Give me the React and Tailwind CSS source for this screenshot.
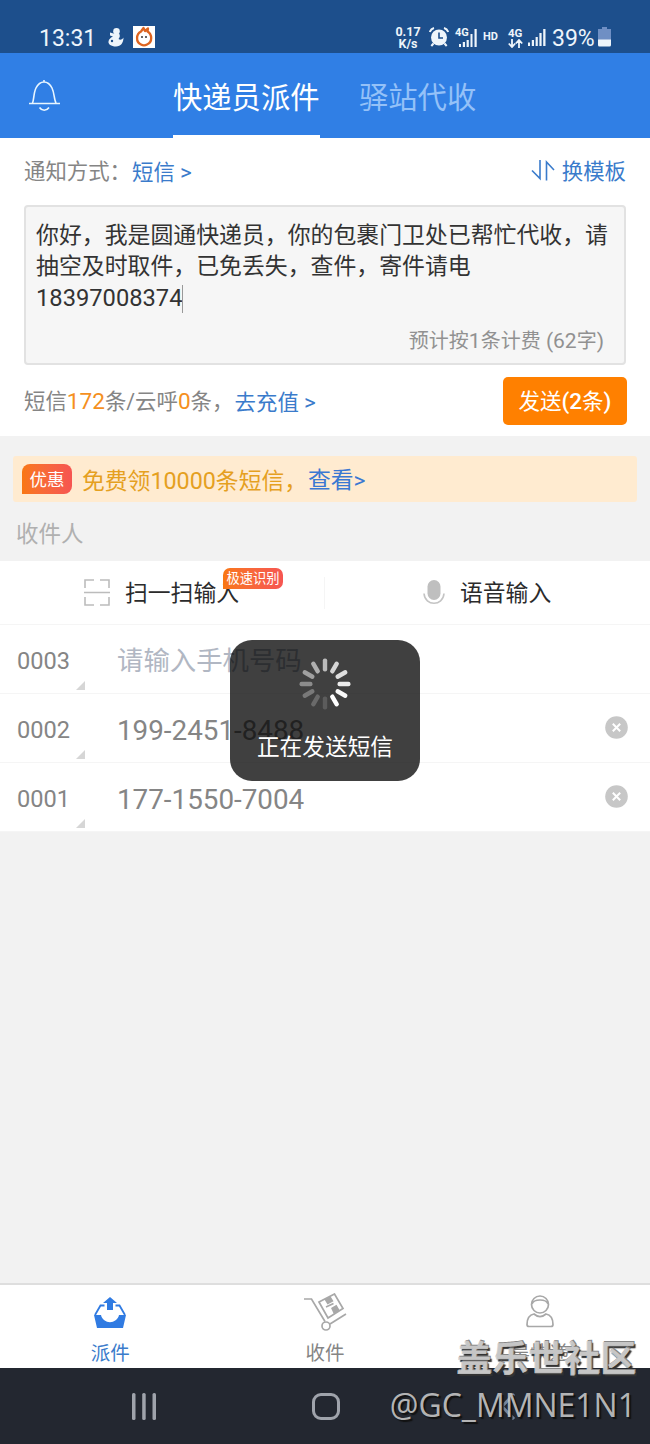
const recipients = [
  { id: "0003", phone: "" },
  { id: "0002", phone: "199-2451-8488" },
  { id: "0001", phone: "177-1550-7004" },
];

const spokes = [0.65, 0.78, 0.83, 0.9, 0.97, 1, 0.15, 0.22, 0.3, 0.4, 0.5, 0.58];

const SignalBars = () => (
  <svg width="18" height="17" viewBox="0 0 18 17" fill="#eef5fb">
    <rect x="0" y="13.5" width="2" height="3.5" />
    <rect x="3.8" y="11" width="2.2" height="6" />
    <rect x="7.6" y="8" width="2.2" height="9" />
    <rect x="11.4" y="4" width="2.2" height="13" />
    <rect x="15.2" y="0" width="2.3" height="17" />
  </svg>
);

const StatusBar = () => (
  <div className="flex h-[53px] items-start bg-[#1d4f8c] pl-[39px] pt-[23px] text-[#eef5fb]">
    <span className="w-[57px] text-[23px] leading-[31px]">13:31</span>
    <svg className="ml-3 mt-[5px]" width="16" height="19" viewBox="0 0 16 19" fill="#eef5fb">
      <circle cx="8.5" cy="3.3" r="3.3" />
      <path d="M5.500 5.500h5.500c1.500 2 .8 4-.5 5.500 2 1.500 3.800.5 5-1.500 0 5-2.500 9-7.500 9-5 0-8-2.500-7.500-5C.8 11 3 9.500 5 8.500L2 7.500V4.500Z" />
      <circle cx="4" cy="13" r="1.200" fill="#1d4f8c" />
    </svg>
    <svg className="ml-[9px] mt-[3px]" width="22" height="22" viewBox="0 0 22 22">
      <rect width="22" height="22" fill="#fff" />
      <path d="M8 5.500C3 8 2.500 16 8 18.500c2 1.200 4 1.200 6 0C20 16 19 8 14.500 5.500L15 2.500 12 5 10.500 2Z" fill="#fff" stroke="#dd6420" strokeWidth="2.300" strokeLinejoin="round" />
      <circle cx="9" cy="11" r="1" fill="#333" />
      <circle cx="13" cy="11" r="1" fill="#333" />
    </svg>
    <div className="ml-[240px] mt-[3px] w-[26px] text-center text-[12.5px] font-bold leading-[12px]">
      <div>0.17</div>
      <div>K/s</div>
    </div>
    <svg className="ml-2 mt-1" width="20" height="20" viewBox="0 0 20 20">
      <circle cx="10" cy="10.500" r="8" fill="#eef5fb" />
      <path d="M10 5.500v5.500h4" fill="none" stroke="#1d4f8c" strokeWidth="1.600" />
      <path d="M.8 5C1.500 3 3 1.500 5 1M15 1c2 .5 3.500 2 4.200 4M4.500 16.500l-2.200 2.500M15.500 16.500l2.200 2.500" fill="none" stroke="#eef5fb" strokeWidth="2" />
    </svg>
    <div className="relative ml-[6px] mt-[6px] h-[18px] w-[22px]">
      <span className="absolute left-0 top-[-2px] text-[11px] font-bold leading-3">4G</span>
      <svg className="absolute left-1 top-0" width="18" height="18" viewBox="0 0 18 18" fill="#eef5fb">
        <path d="M0 15h2v3H0zM3.800 13H6v5H3.800zM7.600 11h2.200v7H7.600zM11.500 5h2v13h-2zM15.500 0h2.200v18h-2.200z" />
      </svg>
    </div>
    <span className="ml-[6px] mt-[7px] w-4 text-[11px] font-bold leading-[14px]">HD</span>
    <div className="ml-[9px] mt-1 w-4">
      <div className="text-[11.500px] font-bold leading-3">4G</div>
      <svg width="15" height="9" viewBox="0 0 15 9" fill="none" stroke="#eef5fb" strokeWidth="1.800">
        <path d="M4 0v8M.8 4.500 4 8l3.200-3.500M11 9V1M7.800 4.500 11 1l3.200 3.500" />
      </svg>
    </div>
    <div className="ml-1 mt-[6px]">
      <SignalBars />
    </div>
    <span className="ml-[6px] w-[44px] text-[23px] leading-[31px]">39%</span>
    <svg className="ml-[2px] mt-[4px]" width="13" height="20" viewBox="0 0 13 20">
      <path d="M4 0h5v2h4v11H0V2h4Z" fill="#6f8fc4" />
      <path d="M0 12.500h13v5.500a1.500 1.500 0 0 1-1.500 1.500h-10A1.500 1.500 0 0 1 0 18Z" fill="#eef5fb" />
    </svg>
  </div>
);

const Header = () => (
  <div className="flex h-[85px] bg-[#307fe5] pl-7 text-[29.3px]">
    <svg className="mt-[26px]" width="33" height="33" viewBox="0 0 33 33" fill="none" stroke="#e8f6ff" strokeWidth="1.600">
      <path d="M16 1v2M1 24.500h31M4.500 24C6 21 5.500 14 8 9c2-4 5-6 8-6s6 2 8 6c2.500 5 2 12 4 15M11.500 28.500c2.500 3.700 7 3.700 9.500 0" />
    </svg>
    <div className="ml-[112px] flex h-[85px] w-[147px] flex-col justify-between whitespace-nowrap text-white">
      <span className="mt-[23px] leading-[44px]">快递员派件</span>
      <span className="h-[3px] bg-white" />
    </div>
    <span className="ml-[39px] mt-[23px] leading-[44px] text-[#94c1f8]">驿站代收</span>
  </div>
);

const MessagePanel = () => (
  <div className="h-[298px] bg-white px-6 pt-[18px] text-[21.4px] text-[#858585]">
    <div className="flex h-8 items-center justify-between leading-8">
      <div className="flex">
        <span className="w-[108px]">通知方式：</span>
        <span className="text-[#3a7bcb]">
          短信 <span className="text-[22.5px]">&gt;</span>
        </span>
      </div>
      <div className="flex items-center text-[#3a7bcb]">
        <svg className="mb-1 mr-[7px]" width="24" height="21" viewBox="0 0 24 21" fill="none" stroke="#3a7bcb" strokeWidth="1.600">
          <path d="M9 0v18.500L1 10.500M15.500 20.500V2l7.500 8" />
        </svg>
        <span>换模板</span>
      </div>
    </div>
    <div className="mt-[17px] flex h-[160px] flex-col justify-between rounded border-2 border-[#e2e2e2] bg-[#f6f6f6] pl-[10px] pr-5">
      <div className="pt-[13px] text-[22.88px] leading-[31.4px] text-[#333]">
        <div className="whitespace-nowrap">你好，我是圆通快递员，你的包裹门卫处已帮忙代收，请</div>
        <div>抽空及时取件，已免丢失，查件，寄件请电</div>
        <div className="flex items-center">
          <span className="text-[23.7px]">18397008374</span>
          <span className="h-7 w-px bg-[#999]" />
        </div>
      </div>
      <div className="pb-[8px] text-right text-[20px] leading-[28px] text-[#919191]">
        预计按<span className="text-[21px]">1</span>条计费<span className="text-[21px]"> (62</span>字<span className="text-[21px]">)</span>
      </div>
    </div>
    <div className="mt-3 flex h-12 items-center justify-between">
      <div className="flex whitespace-nowrap pt-[3px] leading-8">
        <span>短信</span>
        <span className="text-[22.600px] text-[#f5901e]">172</span>
        <span>条/云呼</span>
        <span className="text-[22.600px] text-[#f5901e]">0</span>
        <span className="w-[44px]">条，</span>
        <span className="text-[#3a7bcb]">
          去充值 <span className="text-[22.5px]">&gt;</span>
        </span>
      </div>
      <button className="-mr-px h-12 w-[124px] rounded-[5px] bg-[#ff8000] pt-[2px] text-[21.500px] text-white">
        发送<span className="text-[22.5px] font-medium">(2</span>条<span className="text-[22.5px] font-medium">)</span>
      </button>
    </div>
  </div>
);

const PromoPanel = () => (
  <div className="h-[125px] px-[13px] pt-5">
    <div className="flex h-[46px] items-center rounded-[3px] bg-[#ffebd0] pl-[9px] text-[22.800px]">
      <span className="h-[30px] w-[50px] rounded-lg rounded-bl-none bg-linear-to-r from-[#f97710] to-[#f65551] pt-px text-center text-[17.500px] leading-[31px] text-white">优惠</span>
      <span className="ml-[10px] w-[226px] whitespace-nowrap pt-[5px] text-[#e5a01f]">
        免费领<span className="text-[23.300px]">10000</span>条短信，
      </span>
      <span className="pt-[5px] text-[#3a78d2]">查看&gt;</span>
    </div>
    <div className="mt-[15px] pl-[3px] text-[22.500px] leading-[34px] text-[#b0b0b0]">收件人</div>
  </div>
);

const InputActions = () => (
  <div className="flex h-16 items-center border-b border-[#f5f5f5] bg-white text-[22.800px] text-[#2b2b2b]">
    <div className="relative flex h-8 w-[325px] items-center border-r border-[#f5f5f5] pl-[84px]">
      <svg width="26" height="27" viewBox="0 0 26 27" fill="none" stroke="#bcbcbc" strokeWidth="1.600">
        <path d="M1 9V1h9M16 1h9v8M25 18v8h-9M10 26H1v-8M0 13.500h26" />
      </svg>
      <span className="ml-[15px] pt-1">扫一扫输入</span>
      <span className="absolute left-[223px] top-[-9px] h-[21px] w-[60px] rounded-[7px] rounded-bl-none bg-linear-to-r from-[#f97710] to-[#f65551] text-center text-[13.300px] leading-[21px] text-white">极速识别</span>
    </div>
    <div className="flex items-center pl-[98px]">
      <svg width="22" height="25" viewBox="0 0 22 25">
        <rect x="4.500" width="13" height="20" rx="6.500" fill="#bfbfbf" />
        <path d="M1 13.500c1 13 19 13 20 0" fill="none" stroke="#c4c4c4" strokeWidth="1.600" />
      </svg>
      <span className="ml-[15px] pt-1">语音输入</span>
    </div>
  </div>
);

const RecipientRow = ({ id, phone }) => (
  <div className="flex h-[69px] items-center border-b border-[#f5f5f5] bg-white pl-[17px] pr-[22px] text-[#858585]">
    <span className="w-[59px] pt-[5px] text-[23.600px]">{id}</span>
    <svg className="mb-[3px] self-end" width="9" height="9" viewBox="0 0 9 9" fill="#d6d6d6">
      <path d="M9 0v9H0Z" />
    </svg>
    {phone ? (
      <span className="ml-8 flex-1 pt-[5px] text-[27.800px]">{phone}</span>
    ) : (
      <span className="ml-8 flex-1 pt-[6px] text-[26.400px] text-[#b1b7c3]">请输入手机号码</span>
    )}
    {phone && (
      <svg className="mb-px" width="23" height="23" viewBox="0 0 23 23">
        <circle cx="11.500" cy="11.500" r="11.300" fill="#c7c7c7" />
        <path d="m7.800 7.800 7.400 7.400m0-7.400-7.400 7.400" stroke="#fff" strokeWidth="2" />
      </svg>
    )}
  </div>
);

const LoadingToast = () => (
  <div className="absolute left-[230px] top-[640px] flex h-[141px] w-[190px] flex-col items-center rounded-[22px] bg-black/75 pt-[18px] text-white">
    <svg width="52" height="52" viewBox="-26 -26 52 52" className="-ml-px">
      {spokes.map((opacity, i) => (
        <rect
          key={i}
          x="-2.200"
          y="-25.500"
          width="4.400"
          height="13"
          rx="2"
          fill="#fff"
          opacity={opacity}
          transform={`rotate(${i * 30})`}
        />
      ))}
    </svg>
    <span className="mt-[21px] text-[22.700px] leading-[34px]">正在发送短信</span>
  </div>
);

const TabBar = () => (
  <div className="flex h-[85px] border-t-2 border-[#dedede] bg-white pr-1 text-[19.500px] leading-7 text-[#858585]">
    <div className="flex flex-1 flex-col items-center pl-1 pt-3 text-[#3a7bcb]">
      <svg width="32" height="31" viewBox="0 0 32 31">
        <path d="M0 18h7c2 9.500 16 9.500 18 0h7l-3 13H3Z" fill="#307be2" />
        <path d="M1 18 6.500 8.500h4M31 18l-5.500-9.500h-4" fill="none" stroke="#307be2" strokeWidth="1.800" />
        <path d="m16 0 7 6h-4v7h-6V6H9Z" fill="#307be2" />
      </svg>
      <span className="mt-[12px]">派件</span>
    </div>
    <div className="flex flex-1 flex-col items-center pl-[2px] pt-2">
      <svg width="43" height="38" viewBox="0 0 43 38" fill="none" stroke="#a8a8a8" strokeWidth="1.700">
        <path d="M0 6h7.500L21 28.500M26 31l16-10" />
        <circle cx="22" cy="33" r="4" />
        <path d="m15 9 15.500-8L39 15.500l-15 9.500Z" />
        <path d="m20.500 6.500 6-3.200 3 5-6 3.200ZM27 15l5.500-3.200 3.300 5.700-6 3.500Z" fill="#a8a8a8" stroke="none" />
        <path d="m22 14 7.500-3.500" />
      </svg>
      <span className="mt-[9px]">收件</span>
    </div>
    <div className="flex flex-1 flex-col items-center pl-[2px] pt-[10px]">
      <svg width="28" height="33" viewBox="0 0 28 33" fill="none" stroke="#a8a8a8" strokeWidth="1.700">
        <circle cx="14" cy="9.500" r="8.500" />
        <path d="M6 9c1-3 4-4 8-4s7 1 8 4M8 19c-5 1-7 5-7 10.500Q1 31.500 3 31.500h22q2 0 2-2C27 24 25 20 20 19c-4 3.500-8 3.500-12 0Z" />
      </svg>
      <span className="mt-[12px]">吴快递</span>
    </div>
  </div>
);

const NavBar = () => (
  <div className="flex h-[76px] items-center bg-[#232730]">
    <svg className="ml-[131px]" width="26" height="27" viewBox="0 0 26 27" fill="#9fa3ab">
      <rect x="1" width="3.500" height="27" rx="1.500" />
      <rect x="11.200" width="3.500" height="27" rx="1.500" />
      <rect x="21.500" width="3.500" height="27" rx="1.500" />
    </svg>
    <span className="ml-[155px] h-[27px] w-[28px] rounded-[9px] border-3 border-[#9fa3ab]" />
    <svg className="ml-[160px]" width="16" height="27" viewBox="0 0 16 27" fill="none" stroke="#74869d" strokeWidth="3">
      <path d="M14 1 2 13.500 14 26" />
    </svg>
  </div>
);

const Watermark = () => (
  <div className="absolute bottom-0 right-[14px] flex h-[108px] flex-col items-end whitespace-nowrap text-[#c9c9c9]/90 [text-shadow:2px_2px_1px_#111]">
    <span className="text-[36px] font-bold leading-[48px] text-[#cfcfcf]/90 [text-shadow:1px_-1px_0_#888,2px_2px_1px_#333]">盖乐世社区</span>
    <span className="font-['Open_Sans',sans-serif] text-[32px] leading-[42px]">@GC_MMNE1N1</span>
  </div>
);

export default function App() {
  return (
    <div className="relative flex h-[1444px] w-[650px] flex-col overflow-hidden bg-[#f2f2f2] font-[Roboto,'Noto_Sans_CJK_SC',sans-serif]">
      <StatusBar />
      <Header />
      <MessagePanel />
      <PromoPanel />
      <InputActions />
      {recipients.map((item) => (
        <RecipientRow key={item.id} id={item.id} phone={item.phone} />
      ))}
      <div className="flex-1" />
      <TabBar />
      <NavBar />
      <LoadingToast />
      <Watermark />
    </div>
  );
}
